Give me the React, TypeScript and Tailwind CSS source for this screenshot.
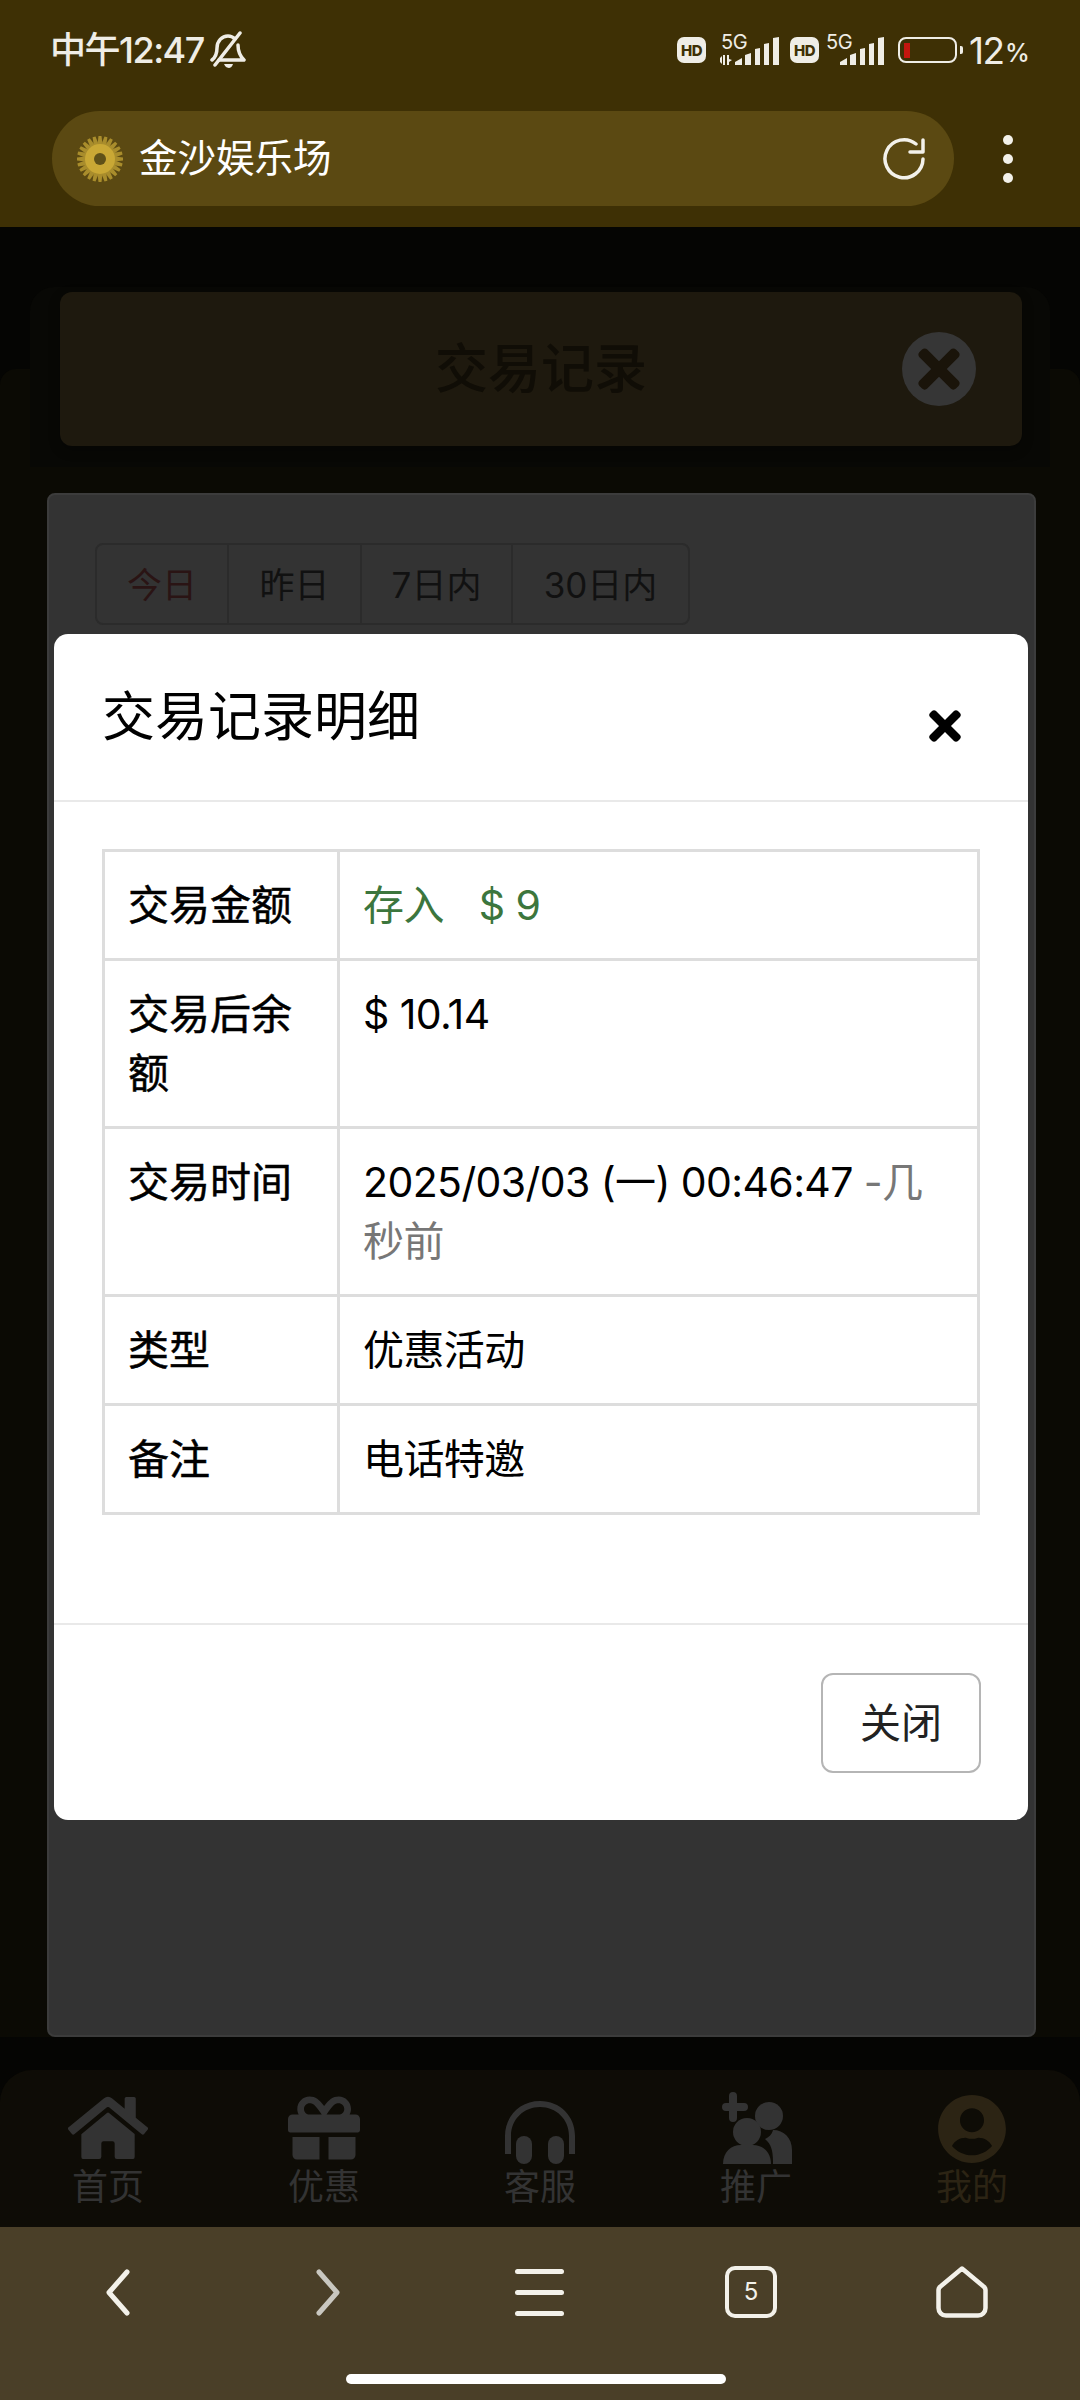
import React from "react";
import { FaGift, FaHome, FaTimes, FaUserCircle } from "react-icons/fa";

const Signal = ({ arrows }: { arrows?: boolean }) => (
  <svg className="absolute left-0 top-0" width="60" height="32" viewBox="0 0 60 32" fill="#efede6">
    {arrows && <path d="M-2 26l4-4v8zM3 21h2v10H3zM7 21h2v10H7zM9 25l3 1-3 2z" />}
    <path d="M15 28l7-4v7h-7zM25 21l6-2v12h-6zM35 15l5-1v17h-5zM44 10l5-1v22h-5zM53 4l6-1v28h-6z" />
  </svg>
);

const Hd = () => (
  <span className="flex h-[26px] w-[29px] items-center justify-center rounded-[7px] bg-[#efede6] text-[15px] font-extrabold leading-none tracking-[-0.5px] text-[#3e3005]">HD</span>
);

const FiveG = () => <span className="absolute left-[1px] top-[-2px] text-[20px] leading-[20px] tracking-[-0.5px] text-[#efede6]">5G</span>;

const Sun = () => {
  const spikes = Array.from({ length: 24 }, (_, i) => i * 15);
  return (
    <svg width="48" height="48" viewBox="0 0 48 48">
      {spikes.map((a) => (
        <path key={a} d="M22.500 1h3l1.500 13h-6z" fill="#a98d2c" transform={`rotate(${a} 24 24)`} />
      ))}
      <circle cx="24" cy="24" r="15" fill="#c9a835" />
      <circle cx="24" cy="24" r="6" fill="#5f5118" />
    </svg>
  );
};

const Headset = () => (
  <svg width="72" height="64" viewBox="0 0 72 64" fill="#333333">
    <path d="M1 54V36C1 16 16 1 36 1s35 15 35 35v18h-6V36C65 19 52 7 36 7S7 19 7 36v18z" />
    <rect x="12" y="36" width="16" height="28" rx="8" />
    <rect x="44" y="36" width="16" height="28" rx="8" />
  </svg>
);

const Friends = () => (
  <svg width="72" height="72" viewBox="0 0 72 72" fill="#333333">
    <path d="M10 0a4 4 0 0 1 4 4v7h7a4 4 0 0 1 0 8h-7v7a4 4 0 0 1-8 0v-7h-3a4 4 0 0 1 0-8h3V4a4 4 0 0 1 4-4z" transform="translate(3 0)" />
    <circle cx="49" cy="24" r="14" />
    <path d="M53 38c11 0 19 8 19 20v14H53v-2c0-12-2-18-8-23 6-3 7-6 8-9z" />
    <circle cx="27" cy="40" r="14" />
    <path d="M3 72c0-12 8-19 18-19h12c10 0 18 7 18 19z" />
  </svg>
);

const rows = [
  { label: "交易金额", value: <span className="text-[#3c763d]">存入<span className="ml-[35px]">$ 9</span></span> },
  { label: "交易后余额", value: "$ 10.14" },
  { label: "交易时间", value: <>2025/03/03 (一) 00:46:47 <span className="text-[#777777]">-几秒前</span></> },
  { label: "类型", value: "优惠活动" },
  { label: "备注", value: "电话特邀" },
];

const ranges = [
  { t: "今日", w: "w-[130px]", c: "text-[#2a1414]" },
  { t: "昨日", w: "w-[133px]", c: "text-[#111111]" },
  { t: "7日内", w: "w-[151px]", c: "text-[#111111]" },
  { t: "30日内", w: "w-[177px]", c: "text-[#111111]" },
];

const tabs = [
  { t: "首页", i: <FaHome className="h-[72px] w-[80px]" />, c: "text-[#333333]" },
  { t: "优惠", i: <FaGift className="h-[72px] w-[72px]" />, c: "text-[#333333]" },
  { t: "客服", i: <Headset />, c: "text-[#333333]" },
  { t: "推广", i: <Friends />, c: "text-[#333333]" },
  { t: "我的", i: <FaUserCircle className="h-[70px] w-[70px]" />, c: "text-[#2c2414]" },
];

export default function App() {
  return (
    <div className="relative flex h-[2400px] w-[1080px] flex-col overflow-hidden bg-[#050503] font-['Inter','Noto_Sans_CJK_SC',sans-serif]">
      <div className="h-[227px] bg-[#3e3005]">
        <div className="flex h-[100px] items-center justify-between pl-[50px] pr-[55px] text-[#efede6]">
          <div className="flex items-center gap-[6px]">
            <span className="text-[36px] font-medium leading-none tracking-[-1.5px]">中午12:47</span>
            <svg width="36" height="38" viewBox="0 0 36 38" fill="none" stroke="#efede6" strokeWidth="3.5" strokeLinecap="round" strokeLinejoin="round">
              <path d="M2 29c4-3 5-6 5-12 0-7 5-12 11-12 3 0 5 1 7 3M28 14c0 7 2 11 6 15H9" />
              <path d="M30 2L5 34" />
              <path d="M14 33h9c-1 3-3 4-4 4s-4-1-5-4z" fill="#efede6" stroke="none" />
            </svg>
          </div>
          <div className="flex items-center">
            <Hd />
            <div className="relative ml-[14px] mr-[10px] h-[32px] w-[60px]">
              <Signal arrows />
              <FiveG />
            </div>
            <Hd />
            <div className="relative ml-[6px] mr-[13px] h-[32px] w-[60px]">
              <Signal />
              <FiveG />
            </div>
            <div className="flex h-[26px] w-[59px] items-center rounded-[8px] border-[2.5px] border-[#efede6] pl-[4px]">
              <div className="h-[15px] w-[6px] bg-[#c4160e]" />
            </div>
            <div className="ml-[3px] mr-[6px] h-[8px] w-[3px] rounded-r-[2px] bg-[#efede6]" />
            <span className="w-[35px] whitespace-nowrap text-[37px] leading-none tracking-[-1.5px]">12</span>
            <span className="ml-[1px] mt-[6px] w-[20px] text-[25px] font-medium leading-none tracking-[-1px]">%</span>
          </div>
        </div>
        <div className="mt-[11px] flex items-center pl-[52px]">
          <div className="flex h-[95px] w-[902px] items-center rounded-full bg-[#5b4912] pl-[24px] pr-[27px]">
            <Sun />
            <span className="ml-[15px] flex-1 text-[38.5px] leading-none text-white">金沙娱乐场</span>
            <svg width="44" height="44" viewBox="0 0 44 44" fill="none" stroke="#f3f1ea" strokeWidth="3.5" strokeLinecap="round" strokeLinejoin="round">
              <path d="M40 22a19 19 0 1 1-7-15" />
              <path d="M40 3v12H27" />
            </svg>
          </div>
          <div className="ml-[49px] flex flex-col gap-[9px]">
            <div className="h-[10px] w-[10px] rounded-full bg-[#f3f1ea]" />
            <div className="h-[10px] w-[10px] rounded-full bg-[#f3f1ea]" />
            <div className="h-[10px] w-[10px] rounded-full bg-[#f3f1ea]" />
          </div>
        </div>
      </div>

      <div className="flex flex-1 flex-col">
        <div className="mb-[33px] mt-[142px] flex flex-1 flex-col rounded-t-[16px] bg-[#0b0a04]">
          <div className="mx-[30px] mt-[-82px] h-[180px] rounded-t-[24px] bg-[#080805] pl-[30px] pr-[28px] pt-[5px]">
            <div className="relative flex h-[154px] items-center justify-end rounded-[12px] bg-[#1e190e] pr-[46px] shadow-[0_4px_12px_rgba(0,0,0,0.3)]">
              <span className="absolute left-[0] right-[0] text-center text-[53px] font-medium leading-none text-[#100d06]">交易记录</span>
              <div className="flex h-[74px] w-[74px] items-center justify-center rounded-full bg-[#363636]">
                <FaTimes className="h-[60px] w-[60px] text-[#1a140a]" />
              </div>
            </div>
          </div>
          <div className="ml-[47px] mr-[44px] mt-[26px] flex-1 rounded-[8px] border-2 border-[#3c3c3c] bg-[#333333] pl-[46px] pt-[48px]">
            <div className="flex h-[82px] w-fit rounded-[8px] border-2 border-[#2b2b2b]">
              {ranges.map((r, i) => (
                <div key={r.t} className={`flex items-center justify-center pt-[2px] text-[35px] leading-none ${r.w} ${r.c} ${i ? "border-l-2 border-[#2b2b2b]" : ""}`}>
                  {r.t}
                </div>
              ))}
            </div>
          </div>
        </div>
        <div className="flex h-[157px] justify-around rounded-t-[32px] bg-[#0e0c06]">
          {tabs.map((t) => (
            <div key={t.t} className={`flex w-[216px] flex-col items-center ${t.c}`}>
              <div className="flex h-[94px] items-end">{t.i}</div>
              <span className="mt-[3px] text-[36px] leading-[40px]">{t.t}</span>
            </div>
          ))}
        </div>
      </div>

      <div className="relative h-[173px] bg-[#4a3f28]">
        <div className="flex h-[147px] items-start pl-[106px] pt-[42px]">
          <svg width="24" height="47" viewBox="0 0 24 47" fill="none" stroke="#f3f1ea" strokeWidth="5" strokeLinecap="round" strokeLinejoin="round">
            <path d="M21 3L3 23.500l18 20.500" />
          </svg>
          <svg className="ml-[186px]" width="24" height="47" viewBox="0 0 24 47" fill="none" stroke="#c9c7c0" strokeWidth="5" strokeLinecap="round" strokeLinejoin="round">
            <path d="M3 3l18 20.500L3 44" />
          </svg>
          <div className="ml-[175px] flex h-[47px] w-[49px] flex-col justify-between">
            <div className="h-[5px] rounded-full bg-[#f3f1ea]" />
            <div className="h-[5px] rounded-full bg-[#f3f1ea]" />
            <div className="h-[5px] rounded-full bg-[#f3f1ea]" />
          </div>
          <div className="ml-[161px] mt-[-3px] flex h-[52px] w-[52px] items-center justify-center rounded-[10px] border-[4.5px] border-[#f3f1ea] text-[24px] leading-none text-[#f3f1ea]">5</div>
          <svg className="ml-[159px] mt-[-3px]" width="52" height="52" viewBox="0 0 52 52" fill="none" stroke="#f3f1ea" strokeWidth="4.5" strokeLinejoin="round">
            <path d="M26 2.500L47 20a5 5 0 0 1 2.500 4v18a7.500 7.500 0 0 1-7.500 7.500H10a7.500 7.500 0 0 1-7.500-7.500V24a5 5 0 0 1 2.500-4z" />
          </svg>
        </div>
        <div className="ml-[346px] h-[10px] w-[380px] rounded-full bg-white" />
      </div>

      <div className="absolute left-[54px] top-[634px] w-[974px] rounded-[14px] bg-white text-black">
        <div className="flex h-[168px] items-start justify-between border-b-2 border-[#e9e9e9] pl-[48px] pr-[60px]">
          <span className="mt-[57px] text-[53px] leading-[53px]">交易记录明细</span>
          <FaTimes className="mt-[69px] h-[46px] w-[46px]" />
        </div>
        <div className="px-[48px] pb-[108px] pt-[47px]">
          <table className="w-[878px] table-fixed border-collapse border-[3px] border-[#dddddd]">
            <tbody>
              {rows.map((r) => (
                <tr key={r.label}>
                  <td className="w-[235px] border-[3px] border-[#dddddd] px-[23px] py-[23.5px] align-top text-[41px] leading-[59px] [-webkit-text-stroke:0.5px_black]">{r.label}</td>
                  <td className="border-[3px] border-[#dddddd] px-[23px] py-[23.5px] align-top text-[41px] leading-[59px] tracking-[-0.6px]">{r.value}</td>
                </tr>
              ))}
            </tbody>
          </table>
        </div>
        <div className="flex h-[197px] justify-end border-t-2 border-[#e9e9e9] pr-[47px] pt-[48px]">
          <div className="flex h-[100px] w-[160px] items-center justify-center rounded-[12px] border-2 border-[#b5b5b5] text-[41px] leading-none text-[#222222]">关闭</div>
        </div>
      </div>
    </div>
  );
}
